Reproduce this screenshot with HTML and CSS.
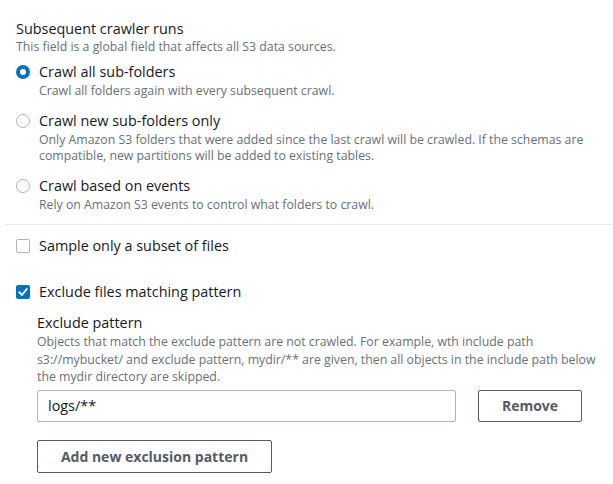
FILE: index.html
```html
<!DOCTYPE html>
<html lang="en">
<head>
  <meta charset="UTF-8" />
  <title>Crawler settings</title>
  <link rel="stylesheet" href="styles.css">
</head>
<body>

<!-- Subsequent crawler runs -->
<section class="field">
  <div class="field-label">Subsequent crawler runs</div>
  <div class="field-desc">This field is a global field that affects all S3 data sources.</div>

  <div class="radio-group">
    <label class="option">
      <span class="radio checked"></span>
      <span class="option-body">
        <span class="option-label">Crawl all sub-folders</span>
        <span class="option-desc">Crawl all folders again with every subsequent crawl.</span>
      </span>
    </label>
    <label class="option">
      <span class="radio"></span>
      <span class="option-body">
        <span class="option-label">Crawl new sub-folders only</span>
        <span class="option-desc">Only Amazon S3 folders that were added since the last crawl will be crawled. If the schemas are compatible, new partitions will be added to existing tables.</span>
      </span>
    </label>
    <label class="option">
      <span class="radio"></span>
      <span class="option-body">
        <span class="option-label">Crawl based on events</span>
        <span class="option-desc">Rely on Amazon S3 events to control what folders to crawl.</span>
      </span>
    </label>
  </div>
</section>

<hr class="divider">

<section class="field">
  <label class="check-row">
    <span class="checkbox"></span>
    <span class="option-label">Sample only a subset of files</span>
  </label>

  <label class="check-row exclude">
    <span class="checkbox checked">
      <svg width="14" height="14" viewBox="0 0 14 14"><path d="M3.2 7.2 L6 10 L10.8 4" fill="none" stroke="#fff" stroke-width="1.8" stroke-linecap="round" stroke-linejoin="round"/></svg>
    </span>
    <span class="option-label">Exclude files matching pattern</span>
  </label>

  <div class="sub-field">
    <div class="field-label">Exclude pattern</div>
    <div class="field-desc long">Objects that match the exclude pattern are not crawled. For example, wth include path s3://mybucket/ and exclude pattern, mydir/** are given, then all objects in the include path below the mydir directory are skipped.</div>

    <div class="pattern-row">
      <input class="text-input" type="text" value="logs/**">
      <button class="btn remove">Remove</button>
    </div>

    <button class="btn add">Add new exclusion pattern</button>
  </div>
</section>

</body>
</html>
```

FILE: styles.css
```css
body {
  margin: 0;
  font-family: 'Open Sans', 'Noto Sans', sans-serif;
  font-size: 14px;
  color: #16191f;
  background: #fff;
}
.field {
  padding: 19px 10px 0 16px;
}
.field-label {
  font-size: 14.4px;
  line-height: 20px;
}
.field-desc {
  font-size: 12.3px;
  line-height: 16px;
  color: #687078;
}
.field-desc.long {
  line-height: 17.5px;
}
.radio-group {
  display: flex;
  flex-direction: column;
  gap: 11px;
  margin-top: 6px;
}
.option {
  display: flex;
  gap: 9px;
}
.option-body {
  display: flex;
  flex-direction: column;
}
.option-label {
  font-size: 14.4px;
  line-height: 22px;
}
.option-desc {
  font-size: 12.3px;
  line-height: 16px;
  color: #687078;
}
.radio {
  flex: none;
  box-sizing: border-box;
  width: 14px;
  height: 14px;
  margin-top: 4px;
  border: 1px solid #aab7b8;
  border-radius: 50%;
  background: #fff;
}
.radio.checked {
  border: 4px solid #0073bb;
}
.divider {
  border: none;
  border-top: 1px solid #eaeded;
  margin: 11px 0 0 5px;
}
.field + .divider + .field {
  padding-top: 11px;
}
.check-row {
  display: flex;
  align-items: center;
  gap: 9px;
  height: 20px;
}
.check-row.exclude {
  margin-top: 26px;
}
.checkbox {
  flex: none;
  box-sizing: border-box;
  width: 14px;
  height: 14px;
  border: 1px solid #aab7b8;
  border-radius: 2px;
  background: #fff;
}
.checkbox.checked {
  border: none;
  background: #0073bb;
}
.checkbox svg {
  display: block;
}
.sub-field {
  padding: 11px 0 0 21px;
}
.pattern-row {
  display: flex;
  gap: 22px;
  margin-top: 4px;
}
.text-input {
  box-sizing: border-box;
  width: 419px;
  height: 32px;
  padding: 0 10px;
  border: 1px solid #aab7b8;
  border-radius: 2px;
  font-family: inherit;
  font-size: 14.4px;
  color: #16191f;
}
.btn {
  box-sizing: border-box;
  height: 32px;
  border: 1px solid #545b64;
  border-radius: 2px;
  background: #fff;
  color: #545b64;
  font-family: inherit;
  font-size: 14px;
  font-weight: bold;
}
.btn.remove {
  width: 104px;
}
.btn.add {
  display: block;
  width: 235px;
  height: 33px;
  margin-top: 18px;
}
```
